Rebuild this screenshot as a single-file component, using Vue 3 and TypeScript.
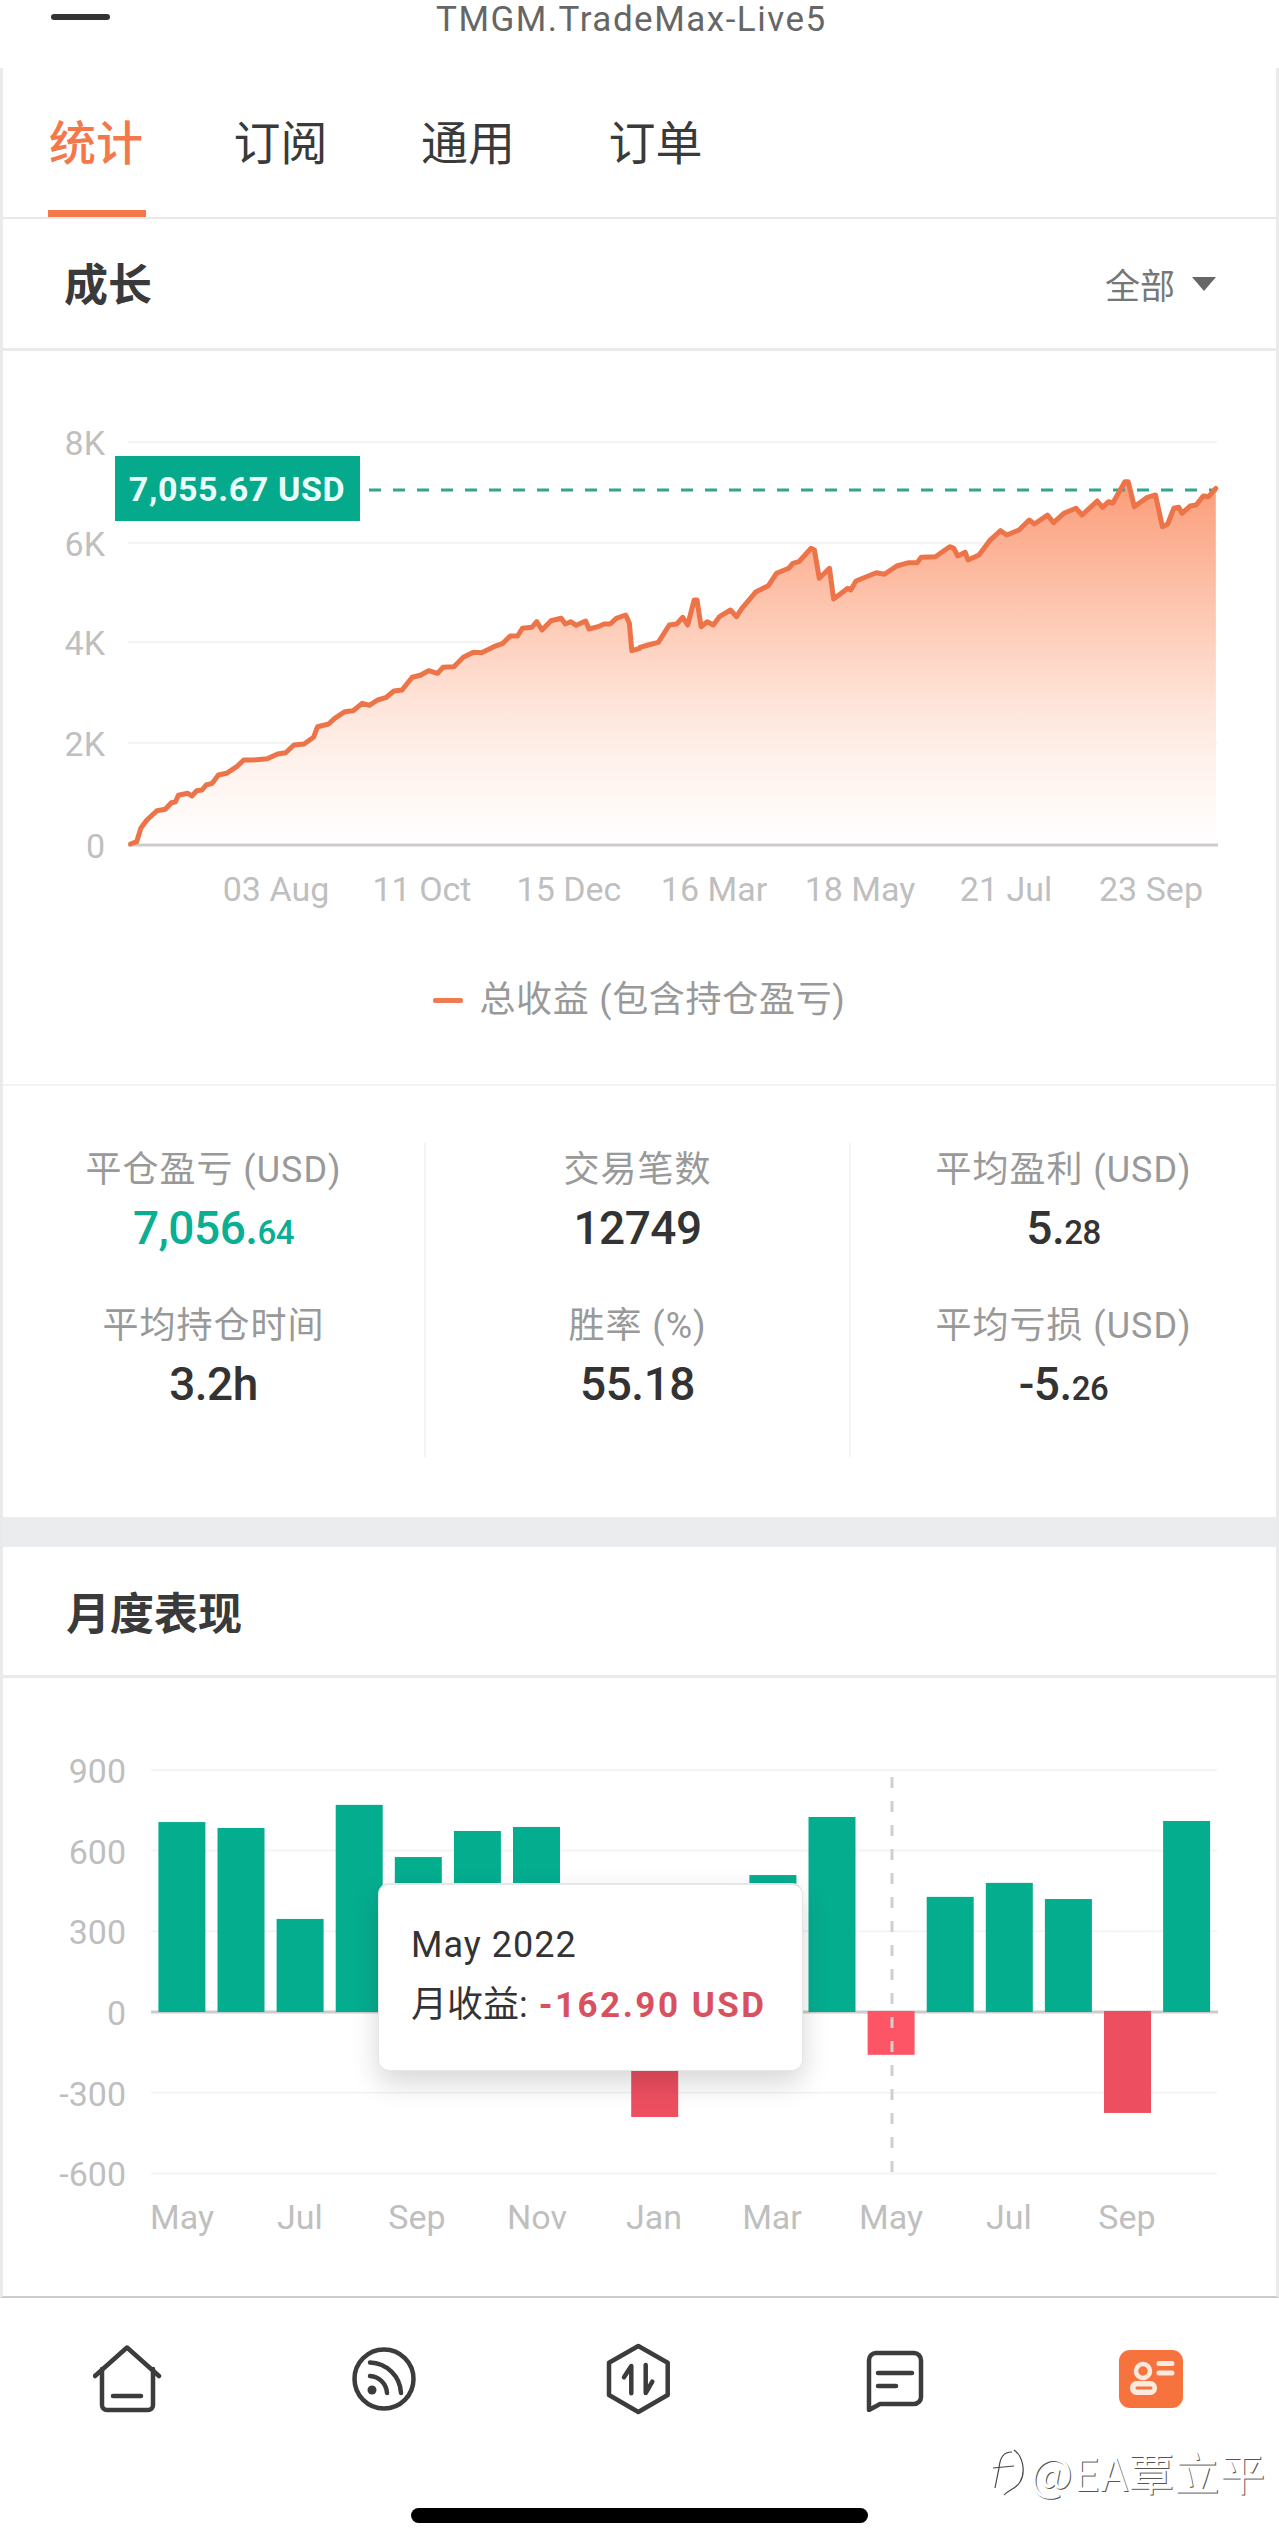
<template>
  <div class="page">
    <header class="topbar">
      <span class="minus"></span>
      <span class="title">TMGM.TradeMax-Live5</span>
    </header>

    <main class="main">
      <nav class="tabs">
        <span v-for="(tab, i) in tabs" :key="tab" class="tab" :class="{ active: i === 0 }">{{ tab }}</span>
      </nav>

      <div class="section-head growth-head">
        <h2>成长</h2>
        <span class="filter">全部<i class="caret"></i></span>
      </div>

      <svg class="chart" viewBox="3 351 1273 599" width="1273" height="599">
        <defs>
          <linearGradient id="areaFill" gradientUnits="userSpaceOnUse" x1="0" y1="490" x2="0" y2="845">
            <stop offset="0" stop-color="#fb9f7d" />
            <stop offset="0.35" stop-color="#fdc8b2" />
            <stop offset="0.6" stop-color="#fee4d9" />
            <stop offset="0.8" stop-color="#fff4ef" />
            <stop offset="1" stop-color="#ffffff" />
          </linearGradient>
        </defs>
        <line v-for="t in growthTicks" :key="t.label" x1="128" x2="1217" :y1="t.y" :y2="t.y" class="grid" />
        <polygon :points="areaPoints" fill="url(#areaFill)" />
        <line x1="128" x2="1218" y1="845" y2="845" class="axis" />
        <line x1="369" x2="1217" y1="490" y2="490" class="target" />
        <polyline :points="linePoints" class="trace" />
        <text v-for="t in growthTicks" :key="t.label" x="105" :y="t.y + 13" text-anchor="end" class="tick">{{ t.label }}</text>
        <text v-for="d in growthDates" :key="d.label" :x="d.x" y="901" text-anchor="middle" class="tick">{{ d.label }}</text>
        <rect x="115" y="456" width="245" height="65" fill="#05a98b" />
        <text x="237" y="501" text-anchor="middle" class="badge">7,055.67 USD</text>
      </svg>

      <div class="legend">
        <i class="legend-dash"></i>
        <span>总收益 (包含持仓盈亏)</span>
      </div>

      <section class="stats">
        <div v-for="(col, c) in stats" :key="c" class="stat-col">
          <div v-for="s in col" :key="s.label" class="stat">
            <div class="stat-label">{{ s.label }}</div>
            <div class="stat-value" :class="{ up: s.up }">{{ s.value }}<small v-if="s.cents">{{ s.cents }}</small></div>
          </div>
        </div>
      </section>

      <div class="band"></div>

      <div class="section-head">
        <h2>月度表现</h2>
      </div>

      <div class="monthly">
        <svg class="chart" viewBox="3 1678 1273 618" width="1273" height="618">
          <line v-for="t in monthTicks" :key="t" x1="151" x2="1217" :y1="toY(t)" :y2="toY(t)" class="grid" />
          <line x1="151" x2="1218" y1="2012" y2="2012" class="axis" />
          <rect
            v-for="b in bars"
            :key="b.x"
            :x="b.x"
            :y="b.y"
            width="47"
            :height="b.h"
            :fill="b.fill"
          />
          <line x1="892" x2="892" y1="1777" y2="2172" class="cursor" />
          <text v-for="t in monthTicks" :key="t" x="126" :y="toY(t) + 13" text-anchor="end" class="tick">{{ t }}</text>
          <text v-for="m in monthLabels" :key="m.x" :x="m.x" y="2229" text-anchor="middle" class="tick">{{ m.label }}</text>
        </svg>

        <div class="tooltip">
          <div class="tip-date">May 2022</div>
          <div class="tip-row">月收益: <b>-162.90 USD</b></div>
        </div>
      </div>
    </main>

    <footer class="footer">
      <div class="tabbar">
        <div class="tabbar-item">
          <svg width="70" height="68" viewBox="0 0 70 68" class="icon">
            <path d="M2 31 L34 2.5 L66 31" />
            <path d="M9 24 V60 a5 5 0 0 0 5 5 H55 a5 5 0 0 0 5-5 V24" />
            <path d="M20 51 H48" />
          </svg>
        </div>
        <div class="tabbar-item">
          <svg width="64" height="64" viewBox="0 0 64 64" class="icon">
            <circle cx="32" cy="32" r="29.5" />
            <path d="M18 29 A18 18 0 0 1 35 46" />
            <path d="M18 15.5 A32 32 0 0 1 49 46" />
            <circle cx="20" cy="43" r="4.5" class="solid" />
          </svg>
        </div>
        <div class="tabbar-item">
          <svg width="70" height="72" viewBox="0 0 70 72" class="icon">
            <path d="M34.3 3 L63.7 19.7 V52 L34.3 69 L5 52 V19.7 Z" />
            <path d="M27.3 50.3 V23 L20 34.3" />
            <path d="M41.7 22 V50 L48.3 38.7" />
          </svg>
        </div>
        <div class="tabbar-item">
          <svg width="62" height="66" viewBox="0 0 62 66" class="icon">
            <path d="M12 7 H50 a7 7 0 0 1 7 7 V51 a7 7 0 0 1-7 7 H16 L5 64 V14 a7 7 0 0 1 7-7 Z" />
            <path d="M14 27 H48" />
            <path d="M14 40 H32" />
          </svg>
        </div>
        <div class="tabbar-item">
          <svg width="64" height="58" viewBox="0 0 64 58">
            <rect width="64" height="58" rx="11" fill="#f6733d" />
            <circle cx="24" cy="21" r="7" fill="none" stroke="#fdeade" stroke-width="4.5" />
            <rect x="11" y="31" width="27" height="14" rx="6.5" fill="#fdeade" />
            <path d="M18 38 H32" stroke="#f6733d" stroke-width="3" stroke-linecap="round" />
            <path d="M40 13.5 H53 M40 23 H53" stroke="#fdeade" stroke-width="5" stroke-linecap="round" />
          </svg>
        </div>
      </div>
      <div class="home-bar"></div>
    </footer>

    <div class="watermark">
      <svg width="34" height="48" viewBox="0 0 34 48" class="wm-logo">
        <path d="M20 4 C11 4 8 10 7 20 L3 40" />
        <path d="M1 20 L22 18" />
        <path d="M22 2 C31 8 34 24 28 34 C24 41 16 42 12 47" />
      </svg>
      <span>@EA覃立平</span>
    </div>
  </div>
</template>

<script setup lang="ts">
const tabs = ['统计', '订阅', '通用', '订单']

const growthTicks = [
  { label: '8K', y: 442 },
  { label: '6K', y: 543 },
  { label: '4K', y: 642 },
  { label: '2K', y: 743 },
  { label: '0', y: 845 }
]

const growthDates = [
  { label: '03 Aug', x: 276 },
  { label: '11 Oct', x: 422 },
  { label: '15 Dec', x: 569 },
  { label: '16 Mar', x: 714 },
  { label: '18 May', x: 860 },
  { label: '21 Jul', x: 1006 },
  { label: '23 Sep', x: 1151 }
]

// traced off the two crops of the reference, x scaled 2.45 and y scaled 3
const traceLeft = [
  320, 1332, 335, 1325, 345, 1285, 360, 1260, 385, 1232, 405, 1228, 420, 1208, 430, 1205, 437, 1186, 460, 1180,
  470, 1188, 482, 1172, 495, 1170, 505, 1155, 520, 1150, 535, 1125, 555, 1120, 580, 1100, 597, 1080, 620, 1080,
  655, 1076, 680, 1062, 700, 1058, 720, 1035, 745, 1032, 768, 1012, 778, 980, 805, 972, 820, 955, 845, 935,
  865, 932, 888, 910, 905, 916, 925, 900, 945, 893, 965, 873, 985, 870, 1010, 832, 1030, 826, 1050, 812,
  1072, 820, 1085, 802, 1112, 800, 1135, 772, 1160, 757, 1180, 758, 1210, 740, 1232, 730, 1250, 708, 1268, 708,
  1280, 685, 1303, 682, 1315, 665, 1328, 690, 1350, 662, 1375, 655, 1385, 672, 1398, 665, 1412, 676, 1435, 663,
  1443, 687, 1465, 680, 1480, 672, 1495, 672, 1510, 655, 1533, 645, 1542, 670, 1548, 752, 1568, 745
]
const traceRight = [
  0, 742, 20, 735, 45, 727, 72, 675, 90, 672, 105, 652, 117, 675, 133, 600, 140, 600, 150, 680,
  165, 665, 180, 675, 195, 650, 222, 630, 237, 650, 250, 625, 285, 575, 315, 557, 335, 520, 365, 505,
  375, 490, 390, 485, 420, 445, 428, 450, 440, 535, 465, 505, 475, 597, 510, 565, 517, 570, 530, 543,
  580, 518, 600, 523, 630, 498, 660, 488, 680, 488, 690, 472, 725, 470, 760, 440, 770, 445, 780, 468,
  798, 457, 805, 480, 832, 465, 858, 422, 885, 392, 900, 405, 930, 390, 955, 360, 968, 372, 1000, 345,
  1015, 368, 1040, 340, 1070, 325, 1085, 345, 1122, 303, 1135, 322, 1150, 305, 1160, 310, 1190, 245, 1198, 245,
  1213, 320, 1245, 292, 1265, 285, 1282, 380, 1295, 372, 1310, 325, 1322, 322, 1330, 340, 1350, 318, 1365, 315,
  1382, 288, 1395, 290, 1413, 265
]

const toPoints = (raw: number[], offset: number, scale: number) => {
  const out: string[] = []
  for (let i = 0; i < raw.length; i += 2) {
    out.push(`${(offset + raw[i] / scale).toFixed(1)},${(400 + raw[i + 1] / 3).toFixed(1)}`)
  }
  return out
}

const tracePoints = [...toPoints(traceLeft, 0, 2.45), ...toPoints(traceRight, 640, 2.454)]
const linePoints = tracePoints.join(' ')
const areaPoints = `${linePoints} 1216,845 130,845`

const stats = [
  [
    { label: '平仓盈亏 (USD)', value: '7,056.', cents: '64', up: true },
    { label: '平均持仓时间', value: '3.2h' }
  ],
  [
    { label: '交易笔数', value: '12749' },
    { label: '胜率 (%)', value: '55.18' }
  ],
  [
    { label: '平均盈利 (USD)', value: '5.', cents: '28' },
    { label: '平均亏损 (USD)', value: '-5.', cents: '26' }
  ]
]

const monthTicks = [900, 600, 300, 0, -300, -600]
const toY = (v: number) => 2012 - v * 0.269

// May 2021 through Oct 2022
const monthly = [706, 684, 346, 770, 576, 673, 688, 300, -394, 200, 509, 725, -162.9, 428, 480, 420, -379, 710]

const bars = monthly.map((v, i) => {
  const h = Math.abs(v) * 0.269
  return {
    x: 158.4 + i * 59.1,
    y: v >= 0 ? 2012 - h : 2011,
    h,
    fill: v >= 0 ? '#05ad8f' : i === 12 ? '#fe5566' : '#ee4f60'
  }
})

const monthLabels = [
  { label: 'May', x: 182 },
  { label: 'Jul', x: 300 },
  { label: 'Sep', x: 417 },
  { label: 'Nov', x: 537 },
  { label: 'Jan', x: 654 },
  { label: 'Mar', x: 772 },
  { label: 'May', x: 891 },
  { label: 'Jul', x: 1009 },
  { label: 'Sep', x: 1127 }
]
</script>

<style scoped>
.page {
  position: relative;
  width: 1279px;
  height: 2544px;
  overflow: hidden;
  background: #fff;
  font-family: Roboto, "Noto Sans CJK SC", sans-serif;
  color: #333;
}

.topbar {
  display: flex;
  align-items: flex-start;
  height: 68px;
  padding-left: 51px;
  box-sizing: border-box;
}
.minus {
  width: 59px;
  height: 6px;
  margin-top: 14px;
  border-radius: 3px;
  background: #333;
}
.title {
  margin-left: 326px;
  font-size: 35px;
  line-height: 40px;
  letter-spacing: 1.5px;
  color: #666;
}

.main {
  height: 2230px;
  box-sizing: border-box;
  border-left: 3px solid #e8eaeb;
  border-right: 3px solid #e8eaeb;
  border-bottom: 2px solid #ccc;
}

.tabs {
  display: flex;
  gap: 89.5px;
  height: 151px;
  padding-left: 45px;
  box-sizing: border-box;
  border-bottom: 2px solid #e8e8e8;
}
.tab {
  display: flex;
  align-items: center;
  justify-content: center;
  box-sizing: border-box;
  width: 98px;
  padding: 0 8px 6px 0;
  font-size: 47px;
  white-space: nowrap;
  color: #3a3a3a;
}
.tab.active {
  color: #f4784a;
  font-weight: 500;
  padding-right: 2px;
  box-shadow: inset 0 -7px 0 #f4784a;
}

.section-head {
  display: flex;
  align-items: center;
  justify-content: space-between;
  height: 131px;
  padding: 0 60px 0 63px;
  box-sizing: border-box;
  border-bottom: 3px solid #e8eaeb;
}
.growth-head {
  height: 132px;
  padding-left: 61px;
}
.section-head h2 {
  margin: 0;
  font-size: 44px;
  font-weight: 700;
  color: #3a3a3a;
}
.growth-head h2 {
  margin-bottom: 4px;
}
.filter {
  display: flex;
  align-items: center;
  gap: 17px;
  font-size: 35px;
  color: #777;
}
.caret {
  width: 0;
  height: 0;
  border-left: 12px solid transparent;
  border-right: 12px solid transparent;
  border-top: 14px solid #666;
}

.chart {
  display: block;
}
.grid {
  stroke: #f4f4f4;
  stroke-width: 2;
}
.axis {
  stroke: #ccc;
  stroke-width: 3;
}
.target {
  stroke: #2fa68e;
  stroke-width: 3;
  stroke-dasharray: 12 12;
}
.trace {
  fill: none;
  stroke: #ec7448;
  stroke-width: 5;
  stroke-linejoin: round;
  stroke-linecap: round;
}
.tick {
  font-size: 34px;
  fill: #bfbfbf;
}
.badge {
  font-size: 34px;
  font-weight: 700;
  letter-spacing: 0.6px;
  fill: #eafff9;
}
.cursor {
  stroke: #d0d0d0;
  stroke-width: 3;
  stroke-dasharray: 11 13;
}

.legend {
  display: flex;
  justify-content: center;
  gap: 16px;
  height: 136px;
  padding-top: 28px;
  box-sizing: border-box;
  border-bottom: 2px solid #f2f2f2;
  font-size: 36px;
  line-height: 44px;
  letter-spacing: 0.7px;
  color: #999;
}
.legend-dash {
  width: 30px;
  height: 5px;
  margin-top: 20px;
  border-radius: 2px;
  background: #ee7c50;
}

.stats {
  display: grid;
  grid-template-columns: 423px 425px 1fr;
  height: 431px;
  padding: 57px 0 60px;
  box-sizing: border-box;
}
.stat-col {
  border-right: 2px solid #f4f4f4;
}
.stat-col:last-child {
  border-right: none;
}
.stat {
  height: 116px;
  margin-bottom: 40px;
  text-align: center;
}
.stat-label {
  font-size: 36px;
  line-height: 54px;
  letter-spacing: 1px;
  color: #999;
}
.stat-value {
  font-size: 46px;
  font-weight: 500;
  line-height: 62px;
  letter-spacing: -0.5px;
  color: #333;
}
.stat-value small {
  font-size: 33px;
}
.stat-value.up {
  color: #09ae93;
}

.band {
  height: 30px;
  background: #eaeced;
}

.monthly {
  position: relative;
}
.tooltip {
  position: absolute;
  left: 375px;
  top: 205px;
  width: 425px;
  height: 188px;
  padding: 30px 0 0 32px;
  box-sizing: border-box;
  background: #fff;
  border: 1px solid #e6e6e6;
  border-top-width: 2px;
  border-radius: 11px;
  box-shadow: 0 12px 28px rgba(0, 0, 0, 0.16);
  color: #333;
}
.tip-date {
  font-size: 36px;
  line-height: 60px;
  letter-spacing: 1px;
}
.tip-row {
  font-size: 36px;
  line-height: 60px;
}
.tip-row b {
  margin-left: 2px;
  font-size: 35px;
  letter-spacing: 2.5px;
  color: #d9505f;
}

.footer {
  display: flex;
  flex-direction: column;
  align-items: center;
}
.tabbar {
  display: flex;
  width: 100%;
  height: 162px;
}
.tabbar-item {
  flex: 1;
  display: flex;
  align-items: center;
  justify-content: center;
}
.icon {
  fill: none;
  stroke: #3c3c3c;
  stroke-width: 4.5;
  stroke-linecap: round;
  stroke-linejoin: round;
}
.icon .solid {
  fill: #3c3c3c;
  stroke: none;
}
.home-bar {
  width: 457px;
  height: 15px;
  margin-top: 48px;
  border-radius: 8px;
  background: #000;
}

/* watermark stamped over the tab bar */
.watermark {
  position: absolute;
  left: 992px;
  top: 2442px;
  display: flex;
  align-items: center;
  gap: 4px;
  font-family: "Noto Sans CJK SC", sans-serif;
  font-size: 45px;
  line-height: 60px;
  letter-spacing: 0.7px;
  color: #fff;
  text-shadow: 1px 1px 0 #555;
  white-space: nowrap;
}
.wm-logo {
  fill: none;
  stroke: #444;
  stroke-width: 1.2;
}
</style>
